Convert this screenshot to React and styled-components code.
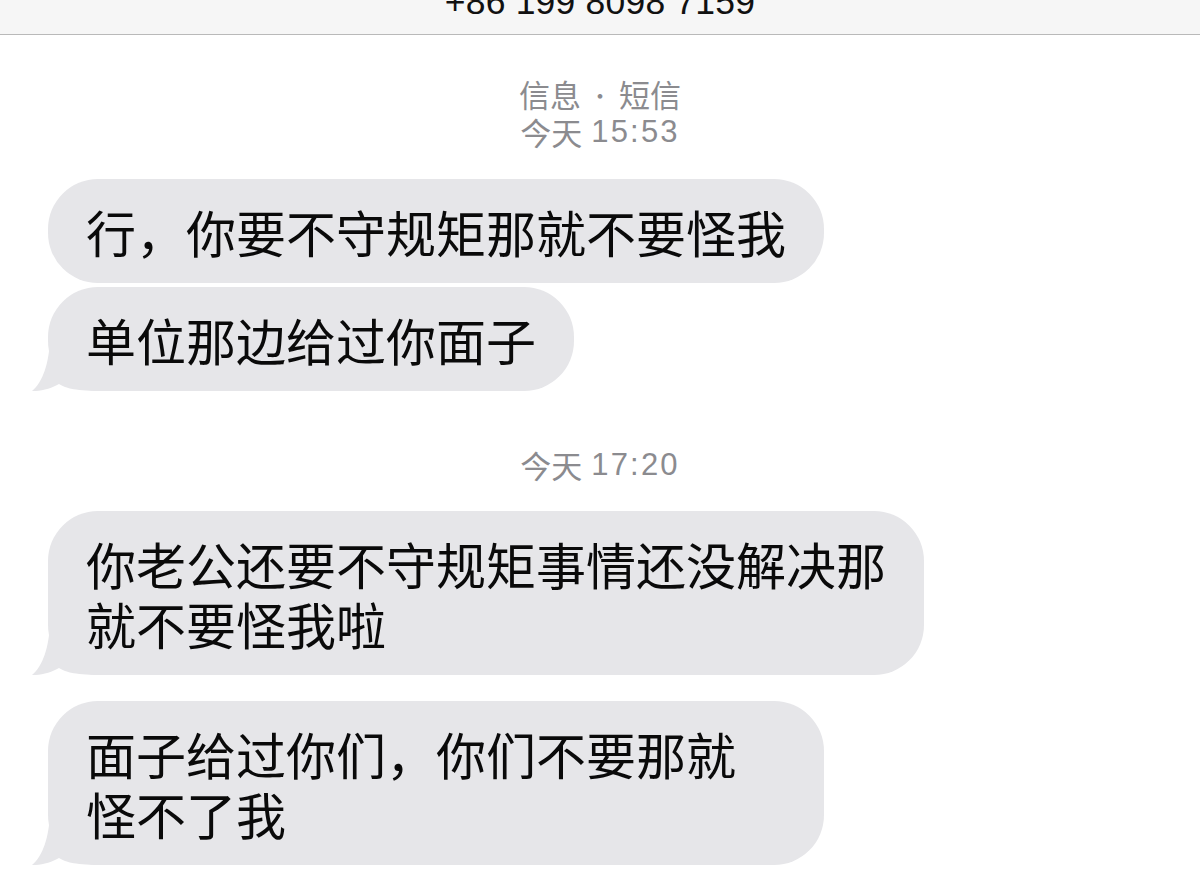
import React from "react";
import styled, { createGlobalStyle } from "styled-components";

const Global = createGlobalStyle`
  html, body { margin: 0; padding: 0; background: #ffffff; }
  body { font-family: "Noto Sans CJK SC", "Noto Sans", sans-serif; }
`;

const Screen = styled.div`
  width: 1200px;
  height: 874px;
  overflow: hidden;
  background: #ffffff;
  display: flex;
  flex-direction: column;
`;

const NavBar = styled.header`
  height: 34px;
  flex: none;
  background: #f6f6f6;
  border-bottom: 1px solid #b9b9b9;
  display: flex;
  justify-content: center;
  overflow: hidden;
`;

const Title = styled.div`
  font-family: "Liberation Sans", "Noto Sans", sans-serif;
  font-size: 35.5px;
  line-height: 36px;
  color: #111111;
  margin-top: -16px;
  letter-spacing: 0.2px;
`;

const Thread = styled.main`
  display: flex;
  flex-direction: column;
  align-items: flex-start;
  padding: 40px 0 0 48px;
`;

const Stamp = styled.div`
  align-self: stretch;
  margin-left: -48px;
  margin-top: ${(p) => p.$top || 0}px;
  display: flex;
  flex-direction: column;
  align-items: center;
  color: #8b8b8f;
`;

const StampLine = styled.div`
  height: 38px;
  display: flex;
  align-items: center;
  font-family: "Noto Sans CJK SC", sans-serif;
  font-size: 31px;
  line-height: 38px;
  white-space: nowrap;
`;

const Digits = styled.span`
  font-family: "Liberation Sans", sans-serif;
  font-size: 31px;
  letter-spacing: 2.2px;
  margin-left: 9px;
`;

const Dot = styled.span`
  display: inline-block;
  width: 38px;
  text-align: center;
  font-size: 22px;
`;

const Bubble = styled.div`
  position: relative;
  background: #e6e6e9;
  border-radius: 50px;
  padding: 22px ${(p) => 38 + (p.$extra || 0)}px 22px 38px;
  margin-top: ${(p) => p.$top || 0}px;
  font-family: "Noto Sans CJK SC", sans-serif;
  font-size: 50px;
  line-height: 60px;
  color: #0a0a0a;
  white-space: nowrap;
`;

const Line = styled.span`
  position: relative;
  z-index: 1;
  display: block;
  height: 60px;
`;

const TailSvg = styled.svg`
  position: absolute;
  left: -16px;
  bottom: 0;
  width: 72px;
  height: 52px;
  display: block;
`;

function Tail() {
  return (
    <TailSvg viewBox="0 0 72 52" aria-hidden="true">
      <path
        d="M18 0 C17 24 11 43 0 52 C9 52.5 20 49 27 45 C34 49.5 44 52 72 52 L72 0 Z"
        fill="#e6e6e9"
      />
    </TailSvg>
  );
}

function Message({ lines, tail, top, extra }) {
  return (
    <Bubble $top={top} $extra={extra}>
      {tail && <Tail />}
      {lines.map((l, i) => (
        <Line key={i}>{l}</Line>
      ))}
    </Bubble>
  );
}

export default function App() {
  return (
    <>
      <Global />
      <Screen>
        <NavBar>
          <Title>+86 199 8098 7159</Title>
        </NavBar>
        <Thread>
          <Stamp>
            <StampLine>
              信息<Dot>•</Dot>短信
            </StampLine>
            <StampLine>
              今天<Digits>15:53</Digits>
            </StampLine>
          </Stamp>
          <Message top={28} lines={["行，你要不守规矩那就不要怪我"]} />
          <Message top={4} tail lines={["单位那边给过你面子"]} />
          <Stamp $top={55}>
            <StampLine>
              今天<Digits>17:20</Digits>
            </StampLine>
          </Stamp>
          <Message
            top={27}
            tail
            lines={["你老公还要不守规矩事情还没解决那", "就不要怪我啦"]}
          />
          <Message
            top={26}
            tail
            extra={50}
            lines={["面子给过你们，你们不要那就", "怪不了我"]}
          />
        </Thread>
      </Screen>
    </>
  );
}
